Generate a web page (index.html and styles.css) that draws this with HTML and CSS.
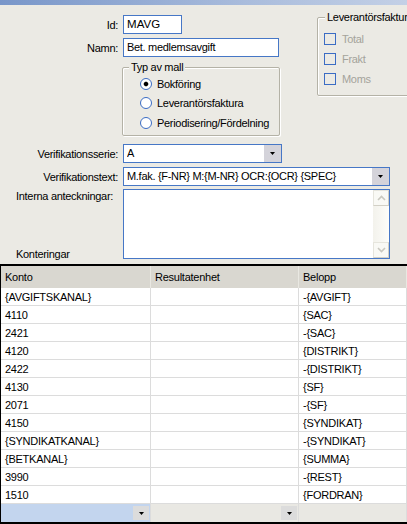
FILE: index.html
```html
<!DOCTYPE html>
<html>
<head>
<meta charset="utf-8">
<link rel="stylesheet" href="styles.css">
</head>
<body>
<div class="titlebar"></div>
<div class="form">
  <div class="top">
    <div class="left">
      <div class="row"><span class="lbl">Id:</span><div class="input w-id">MAVG</div></div>
      <div class="row"><span class="lbl">Namn:</span><div class="input w-namn">Bet. medlemsavgift</div></div>
      <div class="row"><span class="lbl"></span>
        <div class="group typ">
          <span class="legend">Typ av mall</span>
          <div class="opt"><span class="radio checked"></span><span>Bokföring</span></div>
          <div class="opt"><span class="radio"></span><span>Leverantörsfaktura</span></div>
          <div class="opt"><span class="radio"></span><span>Periodisering/Fördelning</span></div>
        </div>
      </div>
    </div>
    <div class="group lev">
      <span class="legend">Leverantörsfaktura</span>
      <div class="chk"><span class="box"></span><span>Total</span></div>
      <div class="chk"><span class="box"></span><span>Frakt</span></div>
      <div class="chk"><span class="box"></span><span>Moms</span></div>
    </div>
  </div>
  <div class="row serie"><span class="lbl">Verifikationsserie:</span>
    <div class="input combo w-serie"><span class="val">A</span><span class="dd"><svg width="5" height="3" viewBox="0 0 5 3"><polygon points="0,0 5,0 2.5,3" fill="#000"/></svg></span></div>
  </div>
  <div class="row vtext"><span class="lbl">Verifikationstext:</span>
    <div class="input combo w-text"><span class="val">M.fak. {F-NR} M:{M-NR} OCR:{OCR} {SPEC}</span><span class="dd"><svg width="5" height="3" viewBox="0 0 5 3"><polygon points="0,0 5,0 2.5,3" fill="#000"/></svg></span></div>
  </div>
  <div class="row notes">
    <div class="lblcol"><span class="lbl-top">Interna anteckningar:</span><span class="lbl-bottom">Konteringar</span></div>
    <div class="textarea">
      <div class="ta-body"></div>
      <div class="vscroll">
        <span class="sbtn"><svg width="9" height="6" viewBox="0 0 9 6"><polyline points="1,5 4.5,1.5 8,5" fill="none" stroke="#c9c8c0" stroke-width="1.6"/></svg></span>
        <span class="track"></span>
        <span class="sbtn"><svg width="9" height="6" viewBox="0 0 9 6"><polyline points="1,1 4.5,4.5 8,1" fill="none" stroke="#c9c8c0" stroke-width="1.6"/></svg></span>
      </div>
    </div>
  </div>
</div>
<div class="grid">
  <div class="hd">Konto</div><div class="hd">Resultatenhet</div><div class="hd">Belopp</div>
  <div class="c">{AVGIFTSKANAL}</div><div class="c"></div><div class="c">-{AVGIFT}</div>
  <div class="c">4110</div><div class="c"></div><div class="c">{SAC}</div>
  <div class="c">2421</div><div class="c"></div><div class="c">-{SAC}</div>
  <div class="c">4120</div><div class="c"></div><div class="c">{DISTRIKT}</div>
  <div class="c">2422</div><div class="c"></div><div class="c">-{DISTRIKT}</div>
  <div class="c">4130</div><div class="c"></div><div class="c">{SF}</div>
  <div class="c">2071</div><div class="c"></div><div class="c">-{SF}</div>
  <div class="c">4150</div><div class="c"></div><div class="c">{SYNDIKAT}</div>
  <div class="c">{SYNDIKATKANAL}</div><div class="c"></div><div class="c">-{SYNDIKAT}</div>
  <div class="c">{BETKANAL}</div><div class="c"></div><div class="c">{SUMMA}</div>
  <div class="c">3990</div><div class="c"></div><div class="c">-{REST}</div>
  <div class="c">1510</div><div class="c"></div><div class="c">{FORDRAN}</div>
  <div class="n sel"><span class="gbtn"><svg width="5" height="3" viewBox="0 0 5 3"><polygon points="0,0 5,0 2.5,3" fill="#000"/></svg></span></div>
  <div class="n"><span class="gbtn"><svg width="5" height="3" viewBox="0 0 5 3"><polygon points="0,0 5,0 2.5,3" fill="#000"/></svg></span></div>
  <div class="n"></div>
</div>
</body>
</html>
```
FILE: styles.css
```css
html, body {
  margin: 0;
  padding: 0;
}
body {
  width: 407px;
  height: 524px;
  overflow: hidden;
  background: #ebeae4;
  font-family: "Liberation Sans", Arial, sans-serif;
  font-size: 11px;
  letter-spacing: -0.3px;
  color: #000;
}
.titlebar {
  height: 5px;
  background: linear-gradient(to right, #7896c9, #a9bcdc 60%, #c3d0e6);
}
.form {
  display: flex;
  flex-direction: column;
}
.top {
  display: flex;
  padding-top: 10px;
}
.left {
  width: 280px;
  flex: none;
  display: flex;
  flex-direction: column;
  gap: 4px;
}
.row {
  display: flex;
  align-items: center;
  gap: 5px;
}
.lbl {
  width: 118px;
  flex: none;
  text-align: right;
}
.input {
  box-sizing: border-box;
  height: 19px;
  border: 1px solid #4677c6;
  background: #fff;
  padding: 0 3px;
  line-height: 17px;
  white-space: nowrap;
  overflow: hidden;
}
.w-id { width: 59px; font-size: 11.5px; letter-spacing: 0.1px; }
.w-namn { width: 156px; }
.w-serie { width: 159px; }
.w-text { width: 267px; }
.combo {
  display: flex;
  align-items: stretch;
  padding-right: 0;
}
.combo .val { flex: 1; overflow: hidden; }
.dd {
  width: 17px;
  flex: none;
  background: #d4d3da;
  display: flex;
  align-items: center;
  justify-content: center;
}
.dd svg, .gbtn svg { display: block; }

.group {
  border: 1px solid #b4b2a6;
  box-shadow: inset 1px 1px #fff, 1px 1px #fff;
  border-radius: 2px;
  box-sizing: border-box;
}
.legend {
  display: block;
  width: max-content;
  line-height: 13px;
  margin: -7px 0 0 6px;
  padding: 0 2px;
  background: #ebeae4;
}
.typ {
  margin-left: -1px;
  margin-top: 6px;
  width: 159px;
  height: 69px;
}
.opt {
  height: 19.5px;
  display: flex;
  align-items: center;
  gap: 5px;
  padding-left: 17px;
}
.radio {
  box-sizing: border-box;
  width: 12px;
  height: 12px;
  border-radius: 50%;
  border: 1px solid #3a6cc4;
  background: #fff;
  flex: none;
}
.radio.checked {
  background: radial-gradient(circle, #000 0 1.8px, #777 2.2px, #fff 2.8px);
}
.lev {
  margin-left: 37px;
  margin-top: 2px;
  width: 110px;
  height: 79px;
  flex: none;
  color: #a4a39b;
}
.lev .legend { margin-left: 7px; color: #000; }
.chk {
  height: 20px;
  display: flex;
  align-items: center;
  gap: 6px;
  padding-left: 6px;
}
.chk:first-of-type { margin-top: 5px; }
.box {
  box-sizing: border-box;
  width: 12px;
  height: 12px;
  border: 1px solid #3a6cc4;
  flex: none;
}
.serie { margin-top: 8px; }
.vtext { margin-top: 4px; }
.notes {
  margin-top: 3px;
  align-items: stretch;
}
.lblcol {
  width: 118px;
  flex: none;
  display: flex;
  flex-direction: column;
  justify-content: space-between;
  padding-left: 16px;
  box-sizing: border-box;
}
.lbl-top { line-height: 13px; margin-top: 1px; }
.lbl-bottom { line-height: 13px; margin-bottom: -2px; }
.textarea {
  box-sizing: border-box;
  width: 267px;
  height: 70px;
  border: 1px solid #4677c6;
  background: #fff;
  display: flex;
}
.ta-body { flex: 1; }
.vscroll {
  width: 16px;
  display: flex;
  flex-direction: column;
  background: linear-gradient(to right, #f3f2ec, #fdfdfa);
}
.sbtn {
  box-sizing: border-box;
  height: 16px;
  border: 1px solid #e6e5dd;
  border-right-color: #d2d0c6;
  border-bottom-color: #d2d0c6;
  background: #f9f9f5;
  display: flex;
  align-items: center;
  justify-content: center;
}
.track { flex: 1; }

.grid {
  margin-top: 5px;
  display: grid;
  grid-template-columns: 150px 148px 108px;
  border-top: 2px solid #000;
  border-bottom: 2px solid #000;
  border-left: 1px solid #000;
  letter-spacing: -0.25px;
}
.grid > div {
  box-sizing: border-box;
  padding-left: 4px;
  white-space: nowrap;
  display: flex;
  align-items: center;
}
.hd {
  height: 22px;
  background: #d9d7d0;
  border-right: 1px solid #e9e8e2;
}
.c {
  height: 18px;
  background: #fff;
  border-right: 1px solid #dcdcdc;
  border-bottom: 1px solid #dcdcdc;
}
.n {
  height: 18px;
  background: #e9e8e3;
  border-right: 1px solid #dcdcdc;
  justify-content: flex-end;
  padding-right: 1px;
}
.n.sel { background: #c3d5ee; }
.gbtn {
  width: 16px;
  height: 14px;
  background: #dcdcdc;
  display: flex;
  align-items: center;
  justify-content: center;
}
```
